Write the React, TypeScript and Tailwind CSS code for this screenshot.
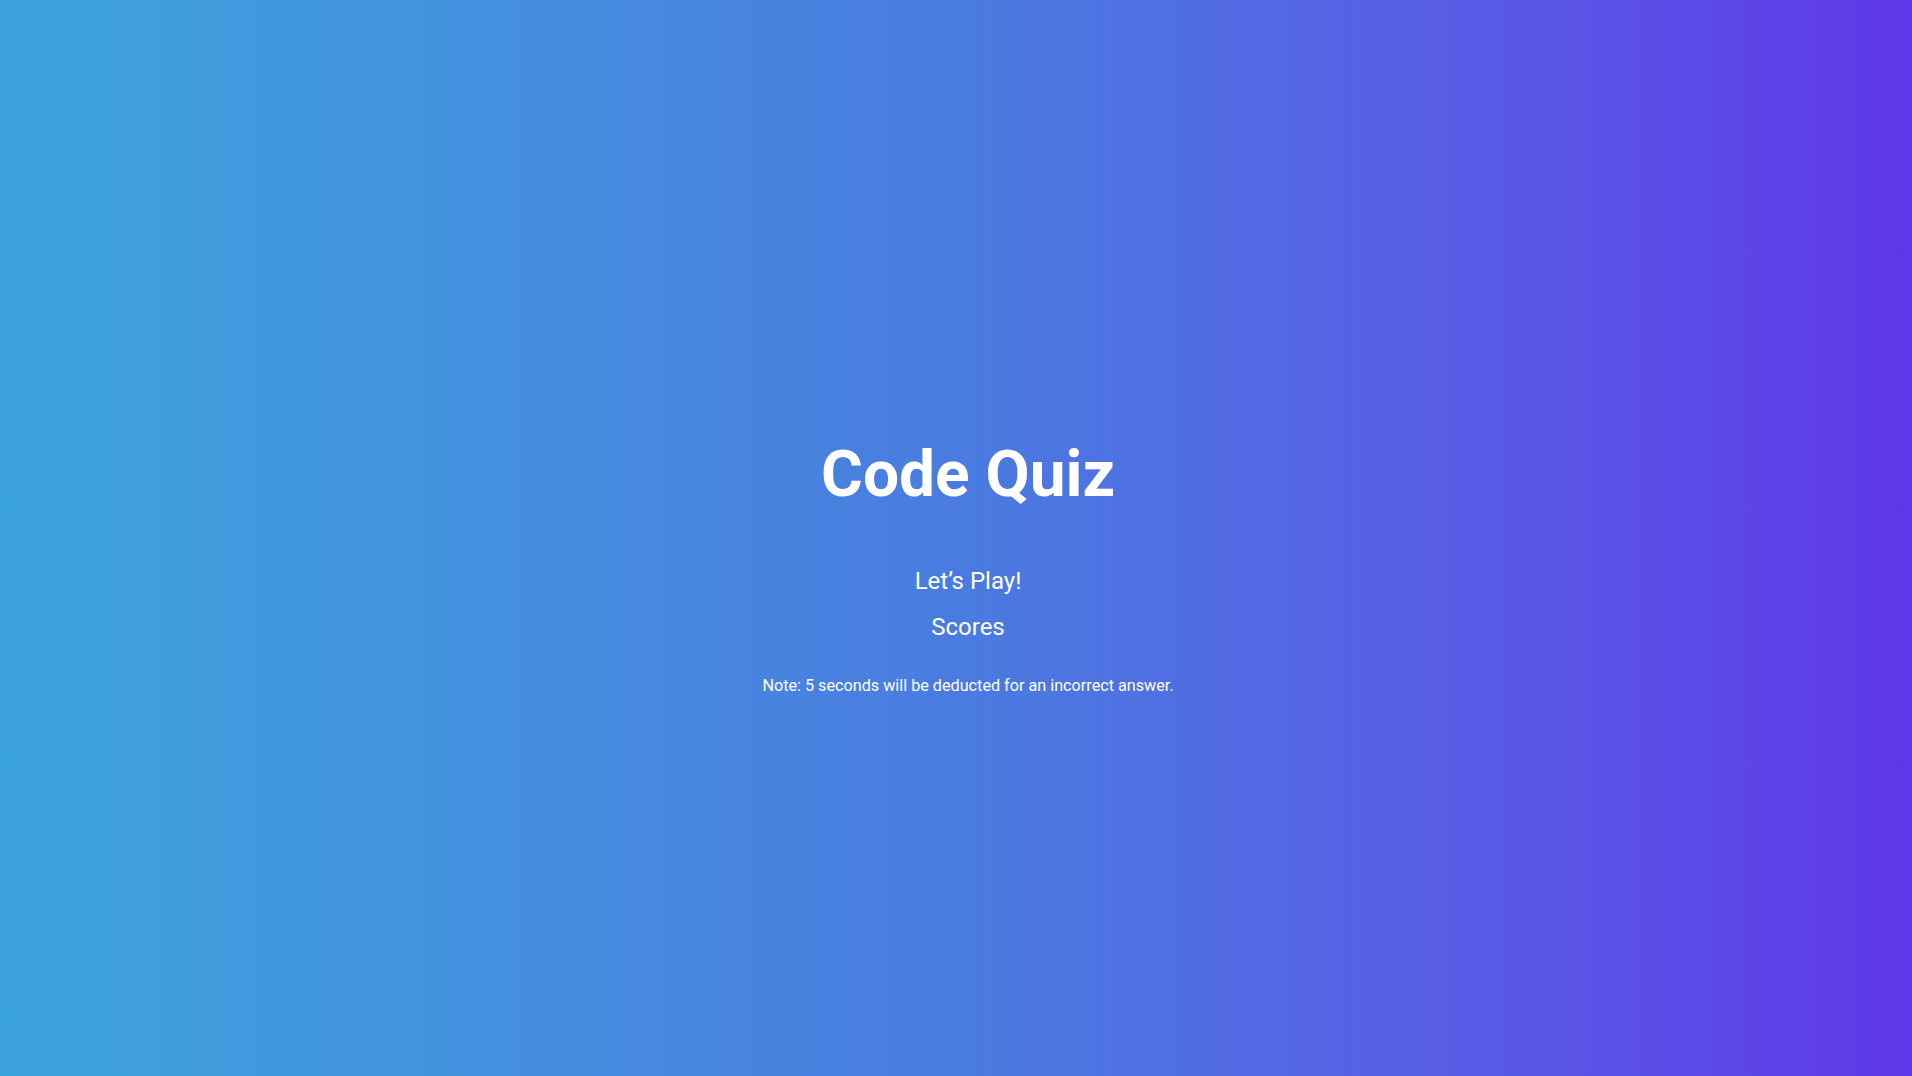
import React from 'react';

export default function App() {
    return (
        <div className="w-[1936px] h-[1117px] pt-[20px] bg-gradient-to-r from-[#3ca4dc] via-[#4a7be0] to-[#5f33e9] text-white font-['Roboto',sans-serif] flex flex-col items-center justify-center">
            {/* Title */}
            <h1 className="text-[64px] font-bold leading-none">Code Quiz</h1>

            {/* Menu */}
            <div className="flex flex-col items-center gap-[22px] mt-[62px]">
                <button className="text-2xl leading-none">Let’s Play!</button>
                <button className="text-2xl leading-none">Scores</button>
            </div>

            <p className="text-[16.2px] leading-none mt-[39px]">
                Note: 5 seconds will be deducted for an incorrect answer.
            </p>
        </div>
    );
}
